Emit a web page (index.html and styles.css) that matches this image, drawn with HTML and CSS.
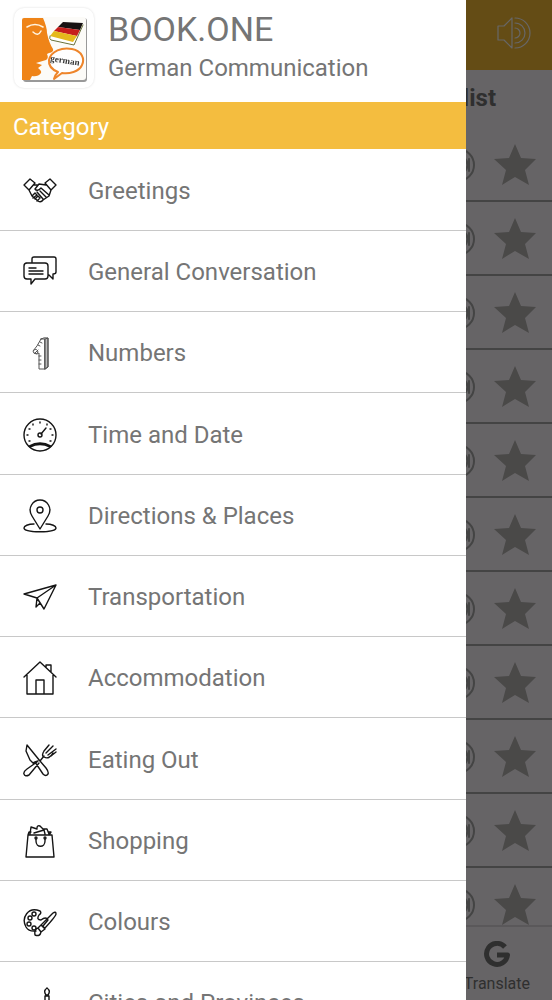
FILE: index.html
```html
<!DOCTYPE html>
<html lang="en">
<head>
<meta charset="utf-8">
<meta name="viewport" content="width=device-width, initial-scale=1">
<title>BOOK.ONE German Communication</title>
<link rel="stylesheet" href="styles.css">
</head>
<body>
<svg class="defs" aria-hidden="true">
  <symbol id="star" viewBox="0 0 44 44"><path d="M22 1 28 15 43 16 32 27 36 42 22 34 9 42 13 27 1 16 16 15Z"/></symbol>
  <symbol id="sound" viewBox="0 0 36 36"><circle cx="18" cy="18" r="16"/><path d="M24 10Q31 18 24 26M29 12v12"/></symbol>
</svg>
<div class="app">
  <main class="screen">
    <header class="topbar">
      <button class="icon-button" aria-label="Play sound">
        <svg class="speaker" viewBox="0 0 36 36"><path d="M2 11h6l8-8v30l-8-8H2zM19 3a15 15 0 0 1 0 30M19 8a10 10 0 0 1 0 20M19 13a5 5 0 0 1 0 10"/></svg>
      </button>
    </header>
    <h2 class="screen-title">list</h2>
    <ul class="phrases"></ul>
    <nav class="bottom-nav">
      <a class="translate" href="#translate">
        <svg class="g-icon" viewBox="0 0 26 26"><path d="M21 6A10.500 10.500 0 1 0 23.500 14H13"/></svg>
        <span>Translate</span>
      </a>
    </nav>
  </main>
  <div class="scrim"></div>
  <aside class="drawer">
    <header class="brand">
      <svg class="logo" viewBox="0 0 82 82" role="img" aria-label="German">
        <rect class="logo-card" x="1" y="1" width="80" height="80" rx="10"/>
        <rect class="logo-shadow" x="10" y="11" width="64" height="64" rx="3"/>
        <rect class="logo-tile" x="9" y="10" width="64" height="63" rx="3"/>
        <path class="face" d="M11 11H30Q34 20 34 26Q36 36 40 42Q41 45 36 46L34 47Q36 51 33 53L23 56 29 58 25 61Q29 64 28 66Q25 70 19 69L17 73H9V13Q9 11 11 11Z"/>
        <path class="eye" d="M14 20Q22 15 30 20M20 25Q25 30 28 24"/>
        <path class="pages" d="M37 29 37 33 61 39 70 18 70 16Z"/>
        <path class="black" d="M50 15 70 16 67 23 45 20Z"/>
        <path class="red" d="M45 20 67 23 64 29 41 24Z"/>
        <path class="gold" d="M41 24 64 29 60 35 37 29Z"/>
        <path class="book-edge" d="M37 29Q36 32 38 33L61 38 70 18"/>
        <path class="bubble" d="M45 65Q35 61 36 53C38 44 49 40 59 42C69 44 72 52 69 58C66 65 56 67 49 66L41 72Q42 68 45 65Z"/>
        <text class="logo-text" x="37" y="54" transform="rotate(9 37 54)">german</text>
      </svg>
      <div class="brand-text">
        <h1>BOOK.ONE</h1>
        <p>German Communication</p>
      </div>
    </header>
    <h2 class="section">Category</h2>
    <nav class="categories">
      <a href="#greetings"><svg viewBox="0 0 34 34"><path d="M1 11 7 5 12 9 6 16ZM33 11 27 5 22 9 28 16ZM11 11 15 11M6 16 9 22 15 27Q18 29 20 26L26 22 28 16M23 11 16 10 12 15Q14 18 18 14L26 21M17 17 23 23M14 18 20 25M9 22 12 19 14 21 10 24M12 25 15 22 17 24 14 27"/></svg>Greetings</a>
      <a href="#conversation"><svg viewBox="0 0 34 34"><path d="M3 8H22Q25 8 25 11V21Q25 24 22 24H12L8 29V24H4Q1 24 1 21V11Q1 8 4 8ZM9 7V4Q9 2 11 2H31Q33 2 33 4V17Q33 19 30 19V24L26 20M6 13h7M6 16h14M6 19h14"/></svg>General Conversation</a>
      <a href="#numbers"><svg class="fine" viewBox="0 0 34 34"><path class="shade" d="M22 3 25 2V31L22 33Z"/><path d="M18 3Q21 1 25 2V31L22 33H16V17L14 18Q10 18 10 15Q14 11 18 3ZM18 3 22 3V33M11 14Q14 12 15 16Q14 19 12 17M12 17l3-3M16 20h2M16 24h2M16 28h2M15 9l2 1M17 6l2 1"/></svg>Numbers</a>
      <a href="#time"><svg viewBox="0 0 34 34"><circle cx="17" cy="17" r="16"/><circle cx="17" cy="17" r="2"/><path d="m18 16 5-6M6 28Q17 22 28 28M7 29Q17 24 27 29M17 4v1M10 6v1M6 11h1M4 17h1M6 23h1M24 6v1M28 11h-1M30 17h-1M28 23h-1"/></svg>Time and Date</a>
      <a href="#directions"><svg viewBox="0 0 34 34"><path d="M17 30 9 17C4 9 10 1 17 1S30 9 25 17ZM11 25C5 25 1 27 1 29C1 34 33 34 33 29C33 27 29 25 23 25"/><circle cx="17" cy="11" r="3"/></svg>Directions &amp; Places</a>
      <a href="#transportation"><svg viewBox="0 0 34 34"><path d="M1 14 33 5 21 29 14 18ZM33 5 14 18 13 27 17 23"/></svg>Transportation</a>
      <a href="#accommodation"><svg viewBox="0 0 34 34"><path d="M1 16 17 1 33 16M4 14V33H30V14M13 33V19H21V33M23 6V4H28V11"/></svg>Accommodation</a>
      <a href="#eating"><svg viewBox="0 0 34 34"><path d="M4 2 3 8 7 17 10 20 12 19 20 31Q23 34 25 31Q26 29 23 25L17 18ZM12 19 15 18M16 20 6 32Q2 34 1 31Q0 29 4 26L14 19M17 18 21 13M21 8Q18 13 21 14Q26 17 30 10M21 8 26 2M23 10 30 3M25 12 33 6M28 13 33 9"/></svg>Eating Out</a>
      <a href="#shopping"><svg viewBox="0 0 34 34"><path d="M5 11H29L31 33H3ZM5 11 6 8H8M26 11 28 8H26M7 10 8 3 14 5M14 4Q14 1 17 2L20 5 24 5 26 10M11 9 21 6 22 10M13 15V17C13 24 22 24 22 17V15"/><circle cx="13" cy="14" r="1"/><circle cx="22" cy="14" r="1"/></svg>Shopping</a>
      <a href="#colours"><svg viewBox="0 0 34 34"><path d="M17 6C5 1-2 13 3 22Q6 27 13 26M17 6Q19 8 16 10Q13 15 18 15Q23 11 25 15L20 21M18 20 30 8Q33 6 33 9Q33 11 22 23ZM18 20 22 24 18 27 15 23ZM15 23Q11 24 12 30Q17 32 18 27"/><circle cx="11" cy="9" r="2"/><circle cx="7" cy="13" r="2"/><circle cx="6" cy="19" r="2"/><circle cx="11" cy="23" r="2"/></svg>Colours</a>
      <a href="#cities"><svg viewBox="0 0 34 34"><path d="M24 2Q20 5 23 9H25Q28 5 24 2M22 14V10H26V14L28 33H20ZM11 16 9 20V33M17 15V33M2 33H33"/></svg>Cities and Provinces</a>
    </nav>
  </aside>
</div>
<script src="app.js"></script>
</body>
</html>
```
FILE: styles.css
```css
* { box-sizing: border-box; }
body { margin: 0; font-family: Roboto, "Liberation Sans", sans-serif; }
h1, h2, p, ul { margin: 0; padding: 0; }
a { color: inherit; text-decoration: none; }
svg { display: block; flex: none; fill: none; stroke: currentColor; stroke-linejoin: round; stroke-linecap: round; }
.defs { position: absolute; width: 0; height: 0; }
.app { position: relative; height: 100vh; overflow: hidden; }
.screen { display: flex; flex-direction: column; height: 100%; background: #fffaff; }
.topbar { display: flex; justify-content: flex-end; align-items: center; flex: none; height: 70px; padding: 0 20px 4px 0; background: #fbbd35; }
button { padding: 0; border: 0; background: none; color: #fff; }
.speaker { width: 36px; height: 36px; stroke-width: 1.2; }
.screen-title { flex: none; height: 58px; padding-right: 56px; text-align: right; font-size: 24px; line-height: 56px; color: #777; }
.phrases { flex: 1; min-height: 0; overflow: hidden; list-style: none; }
.phrases li { display: flex; justify-content: flex-end; align-items: center; gap: 17px; height: 74px; padding: 2px 15px 0 0; border-bottom: 2px solid #aaa; color: #aaa; }
.phrases .sound { width: 36px; height: 36px; stroke-width: 2; }
.phrases .star { width: 44px; height: 44px; fill: #b8b6b4; stroke: none; }
.bottom-nav { display: flex; justify-content: flex-end; flex: none; height: 75px; padding: 14px 22px 0 0; border-top: 2px solid #e0dbe0; background: #fffaff; color: #777; }
.translate { display: flex; flex-direction: column; align-items: center; gap: 5px; font-size: 16px; line-height: 24px; }
.g-icon { width: 26px; height: 26px; stroke-width: 5; stroke-linecap: butt; }
.scrim { position: absolute; inset: 0; background: rgba(0, 0, 0, 0.6); }
.drawer { position: absolute; inset: 0 86px 0 0; overflow: hidden; background: #fff; color: #757575; }
.brand { display: flex; gap: 13px; height: 102px; padding: 7px 13px 0; }
.logo { width: 82px; height: 82px; stroke: none; filter: drop-shadow(0 0 1px #ddd); }
.logo-card { fill: #fff; }
.logo-shadow { fill: #999; }
.logo-tile { fill: #fcfbf8; }
.face { fill: #ef8418; }
.eye { stroke: #fff3df; stroke-width: 1.5; }
.pages { fill: #fff; }
.black { fill: #171212; }
.red { fill: #c61f1c; }
.gold { fill: #e5b91c; }
.book-edge { stroke: #69713a; }
.bubble { fill: #fff; stroke: #ee852b; stroke-width: 2; }
.logo-text { fill: #333; font: bold 9px "Liberation Serif", serif; }
h1 { font-size: 34px; line-height: 40px; font-weight: 400; }
.brand-text { padding-top: 2px; }
.brand-text p { font-size: 24px; line-height: 38px; }
.section { height: 47px; padding-left: 13px; background: #f4bd3f; color: #fff; font-size: 24px; line-height: 50px; font-weight: 400; }
.categories { padding-top: 1px; }
.categories a { display: flex; align-items: center; gap: 31px; height: 81px; padding: 2px 23px 0; border-bottom: 1px solid #c8c8c8; font-size: 24px; line-height: 32px; }
.categories a:nth-child(4n) { height: 82px; }
.categories svg { width: 34px; height: 34px; color: #151515; stroke-width: 1.4; }
.categories .fine { color: #555; stroke-width: 1; }
.shade { fill: #bbb; }
```
FILE: app.js
```js
const phrases = document.querySelector('.phrases');
for (let i = 0; i < 11; i += 1) {
  phrases.insertAdjacentHTML('beforeend',
    '<li><svg class="sound"><use href="#sound"/></svg><svg class="star"><use href="#star"/></svg></li>');
}
```
